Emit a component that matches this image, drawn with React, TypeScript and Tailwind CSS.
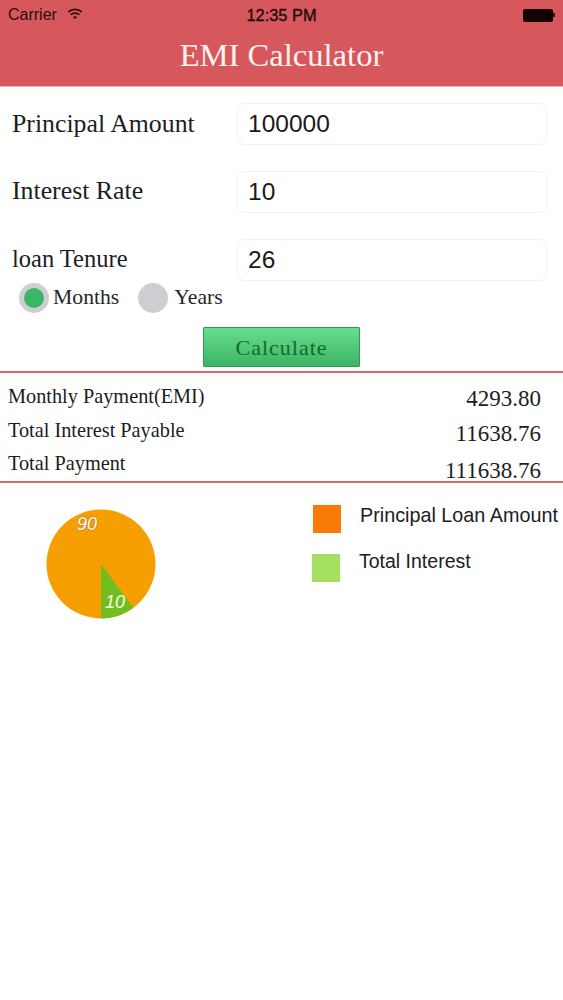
import React from 'react';

const serif = "font-['Liberation_Serif',serif]";
const sans = "font-['Liberation_Sans',sans-serif]";

const inputRows = [
  { label: 'Principal Amount', value: '100000', labelClass: 'text-[25.8px]' },
  { label: 'Interest Rate', value: '10', labelClass: 'pb-[2px] text-[25.8px]' },
  { label: 'loan Tenure', value: '26', labelClass: 'pb-[2px] text-[24.5px]' },
];

const results = [
  { label: 'Monthly Payment(EMI)', value: '4293.80', labelClass: 'h-[35px] pt-[1px]', valueClass: 'pt-[3px]' },
  { label: 'Total Interest Payable', value: '11638.76', labelClass: 'h-[33px]', valueClass: 'pt-[4px]' },
  { label: 'Total Payment', value: '111638.76', labelClass: 'h-[33px]', valueClass: 'pt-[8px]' },
];

const StatusBar = () => (
  <div className={`flex h-[28px] items-center justify-between pl-[8px] pr-[8px] pt-[2px] text-[16px] text-[#2a0d0e] ${sans}`}>
    <div className="flex w-[150px] items-center gap-[10px]">
      <span>Carrier</span>
      <svg width="16" height="12" viewBox="0 0 15 12" fill="none" stroke="#2a0d0e" strokeWidth="1.8" className="-mt-[3px]">
        <path d="M0.8 4 C4.5 0.4 10.5 0.4 14.2 4" />
        <path d="M3.2 6.6 C5.5 4.5 9.5 4.5 11.8 6.6" />
        <path d="M7.5 11.2 L5.6 9 C6.6 8.1 8.4 8.1 9.4 9 Z" fill="#2a0d0e" stroke="none" />
      </svg>
    </div>
    <span className="text-[16.4px] text-[#1c0808] [-webkit-text-stroke:0.3px_#1c0808]">12:35 PM</span>
    <div className="flex w-[150px] items-center justify-end">
      <div className="h-[13px] w-[30px] rounded-[2px] bg-[#120404]" />
      <div className="h-[4px] w-[1.5px] bg-[#3a1414]" />
    </div>
  </div>
);

const Pie = () => (
  <svg width="110" height="110" viewBox="0 0 110 110">
    <circle cx="55" cy="55" r="54.5" fill="#f79f00" />
    <path d="M55 55 L55 109.5 A54.5 54.5 0 0 0 87.6 98.7 Z" fill="#74bd1f" />
    <text x="31" y="21" fontSize="18" fontStyle="italic" fill="#fff" stroke="#b87a10" strokeWidth="1.2" paintOrder="stroke" fontFamily="'Liberation Sans', sans-serif">90</text>
    <text x="59" y="99" fontSize="18" fontStyle="italic" fill="#f6ffe6" fontFamily="'Liberation Sans', sans-serif">10</text>
  </svg>
);

export default function App() {
  return (
    <div className="min-h-[1000px] w-[563px] overflow-hidden bg-white">
      <header className="h-[87px] border-b border-[#e8b5b6] bg-[#d6585c]">
        <StatusBar />
        <h1 className={`text-center text-[32.6px] leading-[54px] text-[#fdf3f1] ${serif}`}>EMI Calculator</h1>
      </header>

      <section className="pt-[16px]">
        <div className="flex flex-col gap-[26px]">
          {inputRows.map((row) => (
            <div key={row.label} className="flex h-[42px] items-center pl-[12px] pr-[16px]">
              <span className={`w-[225px] text-[#1d1d1d] ${row.labelClass} ${serif}`}>{row.label}</span>
              <div className={`flex h-[42px] flex-1 items-center rounded-[7px] border border-[#f0f0f0] pl-[10px] text-[24.5px] text-[#1a1a1a] ${sans}`}>
                {row.value}
              </div>
            </div>
          ))}
        </div>

        <div className={`flex h-[34px] items-center pl-[19px] text-[21.7px] text-[#262626] ${serif}`}>
          <div className="flex h-[30px] w-[30px] items-center justify-center rounded-full bg-[#cfcfd2]">
            <div className="h-[20px] w-[20px] rounded-full bg-[#3bb567]" />
          </div>
          <span className="mb-[2px] ml-[4px]">Months</span>
          <div className="ml-[19px] h-[30px] w-[30px] rounded-full bg-[#cfcdd1]" />
          <span className="mb-[2px] ml-[6px]">Years</span>
        </div>

        <div className="mt-[12px] flex justify-center">
          <button className={`h-[40px] w-[157px] rounded-[1px] border border-[#2f9a57] bg-gradient-to-b from-[#68dd8c] to-[#3cb565] text-[22px] tracking-[1px] text-[#12692f] ${serif}`}>
            Calculate
          </button>
        </div>
      </section>

      <section className="mt-[4px] h-[112px] border-y-2 border-[#d9686b] pt-[10px]">
        {results.map((row) => (
          <div key={row.label} className={`flex justify-between pl-[8px] pr-[22px] ${row.labelClass} ${serif}`}>
            <span className="text-[20.3px] leading-[24px] text-[#1d1d1d]">{row.label}</span>
            <span className={`text-[23px] leading-[24px] text-[#1d1d1d] ${row.valueClass}`}>{row.value}</span>
          </div>
        ))}
      </section>

      <section className="flex pt-[26px]">
        <div className="ml-[46px] shrink-0">
          <Pie />
        </div>
        <div className={`ml-[157px] flex flex-col gap-[21px] text-[#202020] ${sans}`}>
          <div className="-mt-[4px] flex">
            <div className="h-[28px] w-[28px] shrink-0 bg-[#f97a08]" />
            <span className="-mt-[4px] ml-[19px] whitespace-nowrap text-[19.8px]">Principal Loan Amount</span>
          </div>
          <div className="-ml-[1px] flex">
            <div className="h-[28px] w-[28px] shrink-0 bg-[#a3e05f]" />
            <span className="-mt-[7px] ml-[19px] whitespace-nowrap text-[19.5px]">Total Interest</span>
          </div>
        </div>
      </section>
    </div>
  );
}
